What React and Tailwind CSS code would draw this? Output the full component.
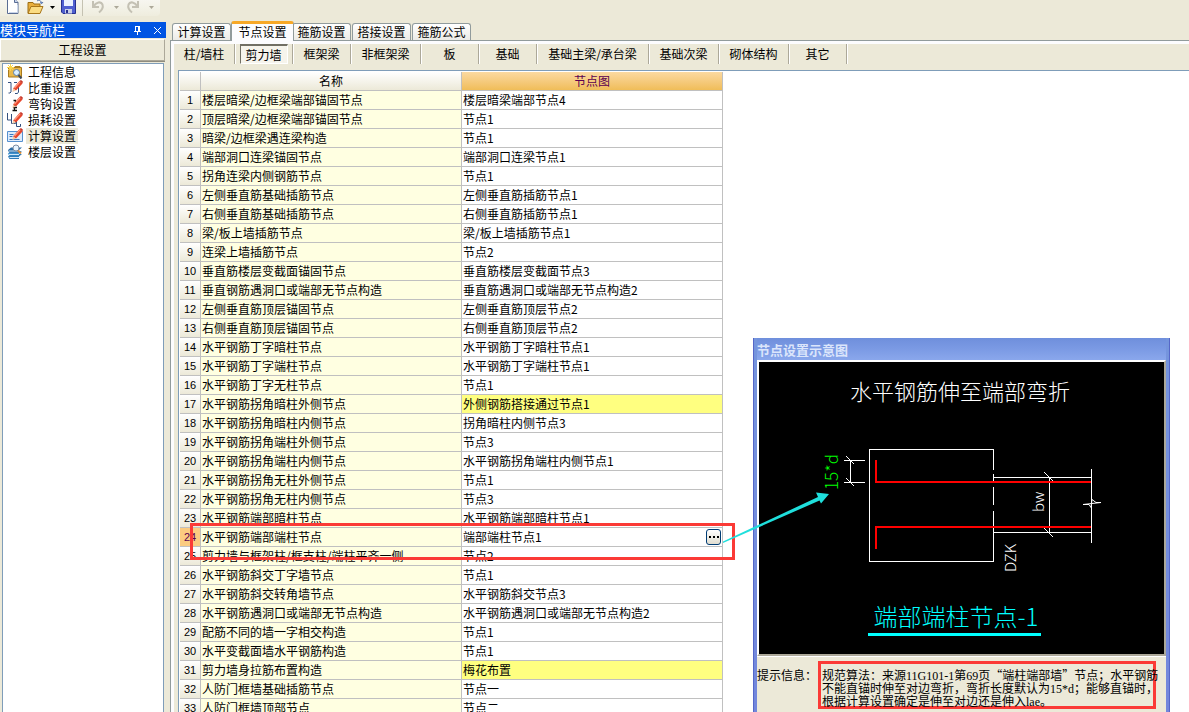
import React, { useState } from 'react';
import clsx from 'clsx';

const tabs = ['计算设置', '节点设置', '箍筋设置', '搭接设置', '箍筋公式'];

const categories = [
  { label: '柱/墙柱', width: 'w-[61px]' },
  { label: '剪力墙', width: 'w-[58px]' },
  { label: '框架梁', width: 'w-[58px]' },
  { label: '非框架梁', width: 'w-[70px]' },
  { label: '板', width: 'w-[58px]' },
  { label: '基础', width: 'w-[58px]' },
  { label: '基础主梁/承台梁', width: 'w-[112px]' },
  { label: '基础次梁', width: 'w-[70px]' },
  { label: '砌体结构', width: 'w-[70px]' },
  { label: '其它', width: 'w-[58px]' },
];

const rows = [
  ['楼层暗梁/边框梁端部锚固节点', '楼层暗梁端部节点4'],
  ['顶层暗梁/边框梁端部锚固节点', '节点1'],
  ['暗梁/边框梁遇连梁构造', '节点1'],
  ['端部洞口连梁锚固节点', '端部洞口连梁节点1'],
  ['拐角连梁内侧钢筋节点', '节点1'],
  ['左侧垂直筋基础插筋节点', '左侧垂直筋插筋节点1'],
  ['右侧垂直筋基础插筋节点', '右侧垂直筋插筋节点1'],
  ['梁/板上墙插筋节点', '梁/板上墙插筋节点1'],
  ['连梁上墙插筋节点', '节点2'],
  ['垂直筋楼层变截面锚固节点', '垂直筋楼层变截面节点3'],
  ['垂直钢筋遇洞口或端部无节点构造', '垂直筋遇洞口或端部无节点构造2'],
  ['左侧垂直筋顶层锚固节点', '左侧垂直筋顶层节点2'],
  ['右侧垂直筋顶层锚固节点', '右侧垂直筋顶层节点2'],
  ['水平钢筋丁字暗柱节点', '水平钢筋丁字暗柱节点1'],
  ['水平钢筋丁字端柱节点', '水平钢筋丁字端柱节点1'],
  ['水平钢筋丁字无柱节点', '节点1'],
  ['水平钢筋拐角暗柱外侧节点', '外侧钢筋搭接通过节点1', true],
  ['水平钢筋拐角暗柱内侧节点', '拐角暗柱内侧节点3'],
  ['水平钢筋拐角端柱外侧节点', '节点3'],
  ['水平钢筋拐角端柱内侧节点', '水平钢筋拐角端柱内侧节点1'],
  ['水平钢筋拐角无柱外侧节点', '节点1'],
  ['水平钢筋拐角无柱内侧节点', '节点3'],
  ['水平钢筋端部暗柱节点', '水平钢筋端部暗柱节点1'],
  ['水平钢筋端部端柱节点', '端部端柱节点1'],
  ['剪力墙与框架柱/框支柱/端柱平齐一侧', '节点2'],
  ['水平钢筋斜交丁字墙节点', '节点1'],
  ['水平钢筋斜交转角墙节点', '水平钢筋斜交节点3'],
  ['水平钢筋遇洞口或端部无节点构造', '水平钢筋遇洞口或端部无节点构造2'],
  ['配筋不同的墙一字相交构造', '节点1'],
  ['水平变截面墙水平钢筋构造', '节点1'],
  ['剪力墙身拉筋布置构造', '梅花布置', true],
  ['人防门框墙基础插筋节点', '节点一'],
  ['人防门框墙顶部节点', '节点二'],
];

function Pencil() {
  return (
    <>
      <path d="M6 8.500 12.500 1l3 2.500-6.500 7z" fill="#e8462c" />
      <path d="M7.500 8 13 1.800" stroke="#ff9a80" strokeWidth="1.200" />
      <path d="M6 8.500 9 10.500l-3.500 1.500z" fill="#f3c9a4" />
      <path d="M12.500 1 14 0l2 1.800-.8 1.700z" fill="#c8382a" />
    </>
  );
}

const navItems = [
  {
    label: '工程信息',
    icon: (
      <>
        <path d="M1.500 3.500h13v9.500h-13z" fill="#e9b84a" stroke="#a87a1e" />
        <path d="M8 3.500V2.500h5v1" stroke="#a87a1e" />
        <path d="M3.500 0v7M0 3.500h7M1 1l5 5M6 1 1 6" stroke="#fbd64a" />
        <circle cx="9.500" cy="8.500" r="3" fill="#d9efff" stroke="#5c7fa8" />
        <path d="m11.500 11 3 3.500" stroke="#3c4a5c" strokeWidth="2" />
      </>
    ),
  },
  {
    label: '比重设置',
    icon: (
      <>
        <path d="M1 2.500h3v9.500l-1 1H1.500M7 2.500h3M11.500 6v6l-1 1.500H8" fill="none" stroke="#34507e" />
        <Pencil />
      </>
    ),
  },
  {
    label: '弯钩设置',
    icon: (
      <>
        <path d="M6.500 4.500h2v4M7.500 9v5M6 11.500h4M5.500 14.500H10" fill="none" stroke="#111" strokeWidth="1.300" />
        <Pencil />
      </>
    ),
  },
  {
    label: '损耗设置',
    icon: (
      <>
        <path d="M.5 1v7h4V2M4.500 3v8.500h4V9M9.500 9v5.500h4V12" fill="none" stroke="#34507e" />
        <Pencil />
      </>
    ),
  },
  {
    label: '计算设置',
    icon: (
      <>
        <path d="M.5 3.500h15v10H.5z" fill="#dcebfb" stroke="#5590cf" />
        <path d="M2.500 6.500h4M2.500 8.500h3M2.500 11.500h10" stroke="#3b78bf" />
        <Pencil />
      </>
    ),
  },
  {
    label: '楼层设置',
    icon: (
      <>
        <path d="M1 12.500 4 10h11l-3 2.500v2.500H2.500z" fill="#2e7cb8" />
        <path d="m1 9.500 3-2.500h11l-3 2.500v2H2z" fill="#3e91cc" />
        <path d="m1 6 3-2.500h11L12 6v2.500H2z" fill="#2a6ca6" />
        <path d="M2 7h10M2 10.500h10M2.500 13.500h10" stroke="#cfe8f8" />
        <circle cx="9" cy="4" r="3" fill="#e6f4ff" stroke="#7b8ca3" />
        <path d="m11 6.500 3 3" stroke="#d58b3c" strokeWidth="2" />
      </>
    ),
  },
];

function Caret({ muted }) {
  return (
    <svg width="5" height="3" viewBox="0 0 5 3" aria-hidden="true">
      <path d="M0 0h5L2.500 3z" fill={muted ? '#aca899' : '#000'} />
    </svg>
  );
}

function Toolbar() {
  return (
    <div className="h-[22px] shrink-0">
      <div className="flex h-4 w-40 items-start rounded-br bg-gradient-to-b from-[#f7f6f0] to-[#efedde] pl-1.5">
        <button type="button" aria-label="新建" className="w-[22px]">
          <svg width="14" height="15" viewBox="0 0 14 15">
            <path d="M1.500-1h7l3.500 3.500v11H1.500z" fill="#fff" stroke="#5a6d94" />
            <path d="M8.500-1v3.500H12" fill="#c5d4ee" stroke="#5a6d94" />
            <path d="M3 12.500h8.500V5" fill="none" stroke="#c9d5ea" />
          </svg>
        </button>
        <button type="button" aria-label="打开" className="flex w-9 items-center gap-1.5">
          <svg width="17" height="15" viewBox="0 0 17 15">
            <path d="M1 2.500h5l1 1.500h6v9H1z" fill="#e8ae3c" stroke="#9c6c12" />
            <path d="m1 13.500 3-7h12l-3 7z" fill="#fbdc82" stroke="#a8761a" />
            <path d="M10 1c2-1.500 4-.5 4.500 2M13 2.500l1.700 1.200L16 2" fill="none" stroke="#4a6ba6" />
          </svg>
          <Caret />
        </button>
        <button type="button" aria-label="保存" className="w-[22px]">
          <svg width="15" height="15" viewBox="0 0 15 15">
            <path d="M.5-1h14v14.500H2L.5 12z" fill="#4f5fd0" stroke="#27308f" />
            <path d="M3 0h9v6H3z" fill="#eaf1ff" />
            <path d="M4 9h7v4.500H4z" fill="#c9cfe8" />
            <path d="M5 10h2v3H5z" fill="#27308f" />
          </svg>
        </button>
        <div className="mr-2 h-4 w-px bg-[#c5c2b2]" />
        <button type="button" aria-label="撤销" className="flex w-9 items-center gap-2">
          <svg width="15" height="15" viewBox="0 0 15 15">
            <path d="M2 1v6h6M2.500 6.500C5 2 10 1 11.500 4.500c1 3-.5 5.500-3.500 8" fill="none" stroke="#c4c1b4" strokeWidth="2" />
          </svg>
          <Caret muted />
        </button>
        <button type="button" aria-label="恢复" className="flex w-9 items-center gap-2">
          <svg width="15" height="15" viewBox="0 0 15 15">
            <path d="M12 1v6H6M11.500 6.500C9 2 4 1 2.500 4.500c-1 3 .5 5.500 3.500 8" fill="none" stroke="#c4c1b4" strokeWidth="2" />
          </svg>
          <Caret muted />
        </button>
      </div>
    </div>
  );
}

function Sidebar() {
  const [current, setCurrent] = useState('计算设置');

  return (
    <aside className="flex w-[166px] shrink-0 flex-col">
      <div className="flex h-4 shrink-0 items-center bg-[#0054e3] pr-1 text-white">
        <h2 className="flex-1 text-[13px] leading-4">模块导航栏</h2>
        <button type="button" aria-label="固定" className="w-5">
          <svg width="9" height="10" viewBox="0 0 9 10">
            <path d="M2.500 1v5M2 1.500h4M5.500 1v5M6.500 1v5M1 6.500h7M4.500 7v3" stroke="#fff" fill="none" />
          </svg>
        </button>
        <button type="button" aria-label="关闭">
          <svg width="9" height="9" viewBox="0 0 9 9">
            <path d="m1 1 7 7M8 1 1 8" stroke="#fff" />
          </svg>
        </button>
      </div>
      <button
        type="button"
        className="mt-px mr-px h-[22px] shrink-0 border border-[#aca899] border-t-white border-l-white leading-5 shadow-[0_1px_0_#8f8c7f]"
      >
        工程设置
      </button>
      <ul className="mt-0.5 mr-0.5 ml-0.5 flex-1 border border-b-0 border-[#7f9db9] bg-white pl-1">
        {navItems.map((item) => (
          <li key={item.label}>
            <button type="button" onClick={() => setCurrent(item.label)} className="flex h-4 items-center gap-[3px]">
              <svg width="16" height="16" viewBox="0 0 16 16" fill="none" aria-hidden="true">
                {item.icon}
              </svg>
              <span className={clsx('h-4 px-0.5 leading-4', current === item.label && 'bg-[#ece9d8]')}>
                {item.label}
              </span>
            </button>
          </li>
        ))}
      </ul>
    </aside>
  );
}

function NodeTable() {
  const [selected, setSelected] = useState(23);

  return (
    <table className="w-[543px] table-fixed border-separate border-spacing-0">
      <colgroup>
        <col className="w-[21px]" />
        <col className="w-[261px]" />
        <col className="w-[261px]" />
      </colgroup>
      <thead>
        <tr className="h-[19px]">
          <th className="border-r border-b border-[#c0c0c0] bg-gradient-to-b from-white to-[#ece9d8] p-0" />
          <th className="border-r border-b border-[#c0c0c0] bg-gradient-to-b from-white to-[#ece9d8] p-0 leading-[18px] font-normal">
            名称
          </th>
          <th className="border-r border-b border-[#c0c0c0] bg-gradient-to-b from-[#fbd9a0] to-[#f0bd58] p-0 leading-[18px] font-normal text-[#5a0050]">
            节点图
          </th>
        </tr>
      </thead>
      <tbody>
        {rows.map(([name, node, changed], i) => (
          <tr key={name} className="h-[19px]" onClick={() => setSelected(i)}>
            <th
              className={clsx(
                'border-r border-b border-[#c0c0c0] p-0 font-[Liberation_Sans] text-[11px] leading-[18px] font-normal',
                selected === i
                  ? 'bg-[#fbcb80] text-[#5a0050]'
                  : 'bg-gradient-to-b from-white to-[#ece9d8]'
              )}
            >
              {i + 1}
            </th>
            <td className="border-r border-b border-[#c0c0c0] bg-[#ffffe1] px-px py-0 leading-[18px] whitespace-nowrap">
              {name}
            </td>
            <td
              className={clsx(
                'border-r border-b border-[#c0c0c0] px-px py-0 leading-[18px] whitespace-nowrap',
                changed ? 'bg-[#ffff80]' : 'bg-white'
              )}
            >
              <div className="flex h-[18px] items-center justify-between">
                <span>{node}</span>
                {selected === i && (
                  <button
                    type="button"
                    aria-label="选择节点图"
                    className="flex h-4 w-[15px] items-center justify-center gap-0.5 rounded-[3px] border border-[#003c74] bg-gradient-to-b from-white to-[#e0ddd0]"
                  >
                    <i className="size-0.5 bg-black" />
                    <i className="size-0.5 bg-black" />
                    <i className="size-0.5 bg-black" />
                  </button>
                )}
              </div>
            </td>
          </tr>
        ))}
      </tbody>
    </table>
  );
}

function MainPanel() {
  const [tab, setTab] = useState('节点设置');
  const [category, setCategory] = useState('剪力墙');

  return (
    <main className="ml-1 flex min-w-0 flex-1 flex-col">
      <div className="flex h-[18px] shrink-0 items-end pl-0.5">
        {tabs.map((label) => (
          <button
            key={label}
            type="button"
            onClick={() => setTab(label)}
            className={clsx(
              'rounded-t-[3px] border border-b-0',
              tab === label
                ? 'z-10 -mr-0.5 -mb-px -ml-px h-5 w-[63px] border-t-[3px] border-[#919b9c] border-t-[#f7a827] bg-[#fcfcfe] pb-1 leading-4'
                : 'mr-px h-[17px] w-[59px] border-[#919b9c] bg-gradient-to-b from-white to-[#ecebe6] leading-4'
            )}
          >
            {label}
          </button>
        ))}
      </div>
      <div className="flex min-h-0 flex-1 flex-col border-t border-l border-[#919b9c] bg-[#fcfcfe] pt-[3px] pl-[3px]">
        <div className="flex min-h-0 flex-1 flex-col bg-[#ece9d8]">
          <div className="flex h-5 shrink-0">
            {categories.map(({ label, width }) => (
              <div
                key={label}
                className={clsx('flex shrink-0 justify-center border-r border-[#aca899] shadow-[1px_0_0_#fff]', width)}
              >
                <button
                  type="button"
                  onClick={() => setCategory(label)}
                  className={clsx(
                    'whitespace-nowrap',
                    category === label
                      ? 'w-12 border border-t-2 border-[#fff] border-t-[#716f64] border-l-[#716f64] bg-[#f6f4ec] leading-[17px]'
                      : 'leading-5'
                  )}
                >
                  {label}
                </button>
              </div>
            ))}
          </div>
          <div className="mt-1.5 ml-1 min-h-0 flex-1 overflow-hidden border-t border-l border-[#7f9db9] bg-white pt-px pl-px">
            <NodeTable />
          </div>
        </div>
      </div>
    </main>
  );
}

function NodeDrawing() {
  return (
    <svg
      viewBox="0 0 405 292"
      className="block w-full bg-black"
      fill="none"
      stroke="#fff"
      shapeRendering="crispEdges"
      role="img"
      aria-label="端部端柱节点"
    >
      <g stroke="none" className="font-light">
        <text x="201" y="38" fill="#fff" fontSize="22" textAnchor="middle">水平钢筋伸至端部弯折</text>
        <text x="197" y="264" fill="#0ff" fontSize="24" textAnchor="middle">端部端柱节点-1</text>
      </g>
      <path d="M109 272.500h173" stroke="#0ff" strokeWidth="3" />

      <path d="M234.500 108V87.500h-124v112h124V155M234.500 112v7M234.500 125v18M234.500 149v10" />
      <path d="M235 115.500h97M235 170.500h97M332.500 107v74" />
      <path d="M290.500 116v54" />
      <path d="m285 110 9 9M285 166l9 9" shapeRendering="auto" />
      <path d="M324 142.500h6l2 3 1-8 4 3h5l-18 2" shapeRendering="auto" />

      <path d="M85 98.500h21M85 120.500h21M91.500 99v21" />
      <path d="m87 94 8 8M87 116l8 8" shapeRendering="auto" />
      <path d="M117 98v22h215M117 187v-22h215" stroke="#f00" strokeWidth="2" />

      <g stroke="none" fill="#fff" className="font-light">
        <text transform="translate(79 128) rotate(-90)" fontSize="17" fill="#0f0">15*d</text>
        <text transform="translate(285 150) rotate(-90)" fontSize="15">bw</text>
        <text transform="translate(257 210) rotate(-90)" fontSize="15">DZK</text>
      </g>
    </svg>
  );
}

function Latin({ children }) {
  return <span className="font-[Liberation_Serif]">{children}</span>;
}

function NodeDialog() {
  return (
    <section className="absolute top-[338px] left-[753px] w-[417px] bg-gradient-to-b from-[#7595dd] to-[#7286dc] px-1 shadow-[inset_1px_0_0_#5567c8,inset_-1px_0_0_#5567c8]">
      <h3 className="h-[22px] bg-gradient-to-b from-[#6f8fdc] via-[#7b9ae4] to-[#8aa7ec] text-[13px] leading-6 font-bold text-[#dbe5fb]">
        节点设置示意图
      </h3>
      <div className="border-2 border-t-white border-r-[#aca899] border-b-[#aca899] border-l-white">
        <NodeDrawing />
      </div>
      <div className="flex items-start border-t border-white bg-[#ece9d8] pt-1 pb-2 leading-3">
        <span className="w-[61px] shrink-0 pt-2 whitespace-nowrap">提示信息：</span>
        <p className="h-12 w-[338px] border-[3px] border-[#fb3a36] pt-[5px] pl-px whitespace-nowrap">
          规范算法：来源<Latin>11G101-1</Latin>第<Latin>69</Latin>页“端柱端部墙”节点；水平钢筋
          <br />
          不能直锚时伸至对边弯折，弯折长度默认为<Latin>15*d</Latin>；能够直锚时，
          <br />
          根据计算设置确定是伸至对边还是伸入<Latin>lae</Latin>。
        </p>
      </div>
    </section>
  );
}

function App() {
  return (
    <div
      lang="zh-CN"
      className="relative flex h-screen flex-col overflow-hidden bg-[#ece9d8] font-['Noto_Sans_CJK_SC',sans-serif] text-xs text-black"
    >
      <Toolbar />
      <div className="flex min-h-0 flex-1">
        <Sidebar />
        <MainPanel />
      </div>
      <NodeDialog />
      <div className="pointer-events-none absolute top-[523px] left-[190px] h-[37px] w-[545px] border-[3px] border-[#fb3a36]" />
      <svg
        className="pointer-events-none absolute top-[490px] left-[720px]"
        width="112"
        height="56"
        viewBox="0 0 112 56"
        aria-hidden="true"
      >
        <path d="M3 51.500 98 7l-2-4.500 13 1.500-8 9.500-1.500-3L3 53z" fill="#1fdfdc" />
      </svg>
    </div>
  );
}

export default App;
